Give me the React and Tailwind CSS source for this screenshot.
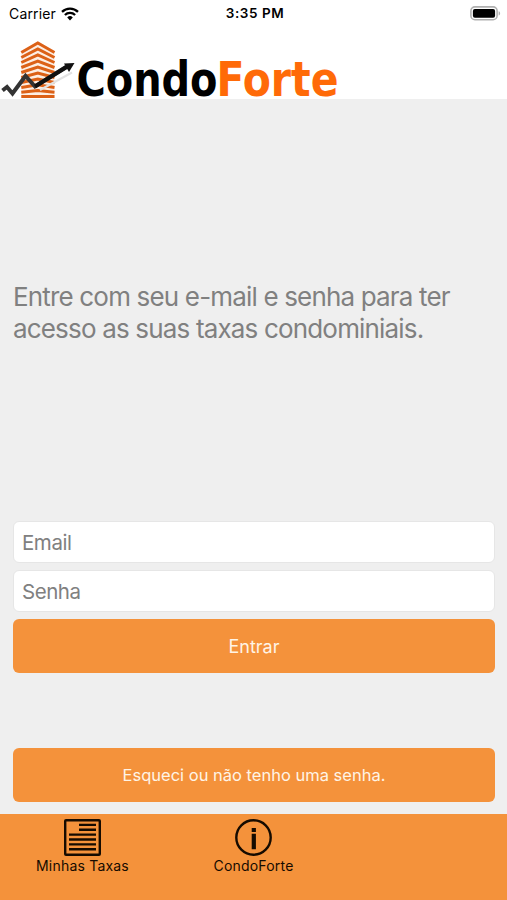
import { useState } from "react";

const TABS = [
  { id: "taxas", label: "Minhas Taxas", icon: DocumentIcon },
  { id: "condo", label: "CondoForte", icon: InfoIcon },
];

const ROOFS = [43, 49, 55, 61, 67, 73, 79];

function WifiIcon() {
  return (
    <svg width="18" height="14" viewBox="0 0 18 14" fill="none" stroke="#000" strokeWidth="2.3">
      <path d="M1 4.9a11.4 11.4 0 0 1 16 0" />
      <path d="M3.9 8a7.3 7.3 0 0 1 10.2 0" />
      <path d="M9 13.4 6.2 10.4a4 4 0 0 1 5.6 0z" fill="#000" stroke="none" />
    </svg>
  );
}

function BatteryIcon() {
  return (
    <svg width="31" height="15" viewBox="0 0 31 15">
      <rect x="0.9" y="0.9" width="26.2" height="12.8" rx="4" fill="#fff" stroke="#b0b0b0" strokeWidth="1.6" />
      <rect x="2.9" y="2.9" width="22.2" height="8.8" rx="2" fill="#000" />
      <path d="M28.6 5.2c2 .7 2 3.6 0 4.3z" fill="#b0b0b0" />
    </svg>
  );
}

function DocumentIcon() {
  return (
    <svg width="37" height="37" viewBox="0 0 37 37" fill="none" stroke="#160b00" strokeWidth="2.4">
      <rect x="1.2" y="1.2" width="34.6" height="34.6" rx="0.8" />
      <path d="M15 5.9h17M15 10.7h17M5 15.6h27M5 20.5h27M5 25.4h27M5 30.3h27" />
    </svg>
  );
}

function InfoIcon() {
  return (
    <svg width="37" height="37" viewBox="0 0 37 37" fill="none">
      <circle cx="18.5" cy="18.5" r="17.2" stroke="#160b00" strokeWidth="2.4" />
      <path d="M16.7 9h4.2v4h-4.2zM16.7 14.8h4.2v15.4h-4.2z" fill="#160b00" />
    </svg>
  );
}

function Logo() {
  return (
    <svg
      width="345"
      height="70"
      viewBox="0 29 345 70"
      className="block overflow-visible"
      role="img"
      aria-label="CondoForte"
    >
      {/* Building */}
      <path d="M21.3 51 37.8 41.6l16.7 9.4v47H21.3z" fill="#fdeee3" />
      <g fill="none" stroke="#dc6117" strokeWidth="3">
        {ROOFS.map((y, i) => (
          <path key={y} d={`M21.3 ${y + 9.5 - i} 37.8 ${y}l16.7 ${9.5 - i}`} />
        ))}
        <path d="M21.3 87.5 37.8 84.8l16.7 2.7M21.3 92.2 37.8 90.6l16.7 1.6M21.3 96.6h33.2" />
      </g>
      {/* Rising arrow */}
      <path d="M40 90 72 72.5" stroke="#e2e2e2" strokeWidth="2" />
      <path d="M2.5 90.5 7 87l5.5 6.5L25.5 76l9.5 10.5L66 67" fill="none" stroke="#333" strokeWidth="4" />
      <path d="m35 86.5 32-19.8" stroke="#111" strokeWidth="4" />
      <path d="M64 63.5 74.5 63 69 72z" fill="#111" />
      <g className="font-['DejaVu_Sans_Condensed','DejaVu_Sans',sans-serif] text-[48px] font-bold">
        <text x="76.5" y="95.6" textLength="141" lengthAdjust="spacingAndGlyphs" fill="#000">
          Condo
        </text>
        <text x="216.5" y="95.6" textLength="122" lengthAdjust="spacingAndGlyphs" fill="#ff6a08">
          Forte
        </text>
      </g>
    </svg>
  );
}

function StatusBar() {
  return (
    <div className="grid h-[29px] grid-cols-3 items-center pb-[2px] pl-[9px] pr-[6px] text-[14px] leading-none text-black">
      <div className="flex items-center gap-[5px]">
        <span className="tracking-[0.15px]">Carrier</span>
        <WifiIcon />
      </div>
      <span className="text-center text-[13.5px] font-semibold tracking-[0.55px]">3:35 PM</span>
      <div className="flex justify-end">
        <BatteryIcon />
      </div>
    </div>
  );
}

function Field({ label, type }) {
  return (
    <input
      type={type}
      placeholder={label}
      aria-label={label}
      className="h-[42px] w-full rounded-md border border-[#e6e6e6] bg-white px-2 text-[20.5px] tracking-[-0.45px] text-black placeholder:text-[#808080] focus:outline-none"
    />
  );
}

export default function App() {
  const [tab, setTab] = useState("taxas");

  return (
    <div className="flex h-[900px] w-full flex-col bg-[#efefef] font-['Inter',sans-serif]">
      <header className="h-[99px] shrink-0 bg-white">
        <StatusBar />
        <Logo />
      </header>

      <main className="flex flex-1 flex-col pb-3 pl-[13px] pr-3">
        <div className="flex h-[422px] items-center pt-[5px]">
          <p className="text-[26px] leading-8 tracking-[-0.83px] text-[#808080]">
            Entre com seu e-mail e senha para ter
            <br />
            acesso as suas taxas condominiais.
          </p>
        </div>

        <form className="flex flex-col gap-[7px]" onSubmit={(e) => e.preventDefault()}>
          <Field label="Email" type="email" />
          <Field label="Senha" type="password" />
          <button className="h-[54px] rounded-md bg-[#f4923b] text-[18px] text-[#fff4e6]">
            Entrar
          </button>
        </form>

        <button className="mt-auto h-[54px] rounded-md bg-[#f4923b] text-[16.5px] text-[#fff4e6]">
          Esqueci ou não tenho uma senha.
        </button>
      </main>

      <nav className="flex h-[86px] shrink-0 bg-[#f4923b]">
        {TABS.map(({ id, label, icon: Icon }) => (
          <button
            key={id}
            onClick={() => setTab(id)}
            aria-pressed={tab === id}
            className="flex w-[177px] flex-col items-center pt-[5px] text-[14px] leading-[18px] tracking-[0.2px] text-[#160b00] first:w-[165px]"
          >
            <Icon />
            <span className="mt-px">{label}</span>
          </button>
        ))}
      </nav>
    </div>
  );
}
